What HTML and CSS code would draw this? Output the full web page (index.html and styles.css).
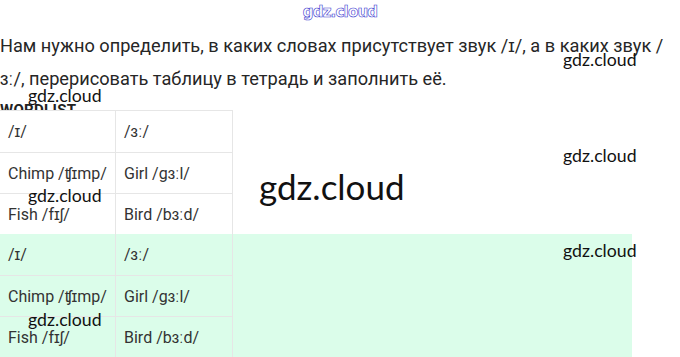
FILE: index.html
```html
<!DOCTYPE html>
<html lang="ru">
<head>
<meta charset="utf-8">
<link rel="stylesheet" href="styles.css">
</head>
<body>
<div class="page">
  <header class="logo">gdz.cloud</header>
  <p class="intro">Нам нужно определить, в каких словах присутствует звук /ɪ/, а в каких звук /<br>ɜː/, перерисовать таблицу в тетрадь и заполнить её.</p>
  <div class="wordlist"><span>WORDLIST</span></div>
  <table class="words">
    <tr class="r1"><td class="c1">/ɪ/</td><td class="c2">/ɜː/</td></tr>
    <tr class="r2"><td>Chimp /ʧɪmp/</td><td>Girl /gɜːl/</td></tr>
    <tr class="r3"><td>Fish /fɪʃ/</td><td>Bird /bɜːd/</td></tr>
  </table>
  <div class="answer">
    <table class="words">
      <tr class="r1"><td class="c1">/ɪ/</td><td class="c2">/ɜː/</td></tr>
      <tr class="r2"><td>Chimp /ʧɪmp/</td><td>Girl /gɜːl/</td></tr>
      <tr class="r3"><td>Fish /fɪʃ/</td><td>Bird /bɜːd/</td></tr>
    </table>
  </div>
  <span class="wm wm-a">gdz.cloud</span>
  <span class="wm wm-b">gdz.cloud</span>
  <span class="wm wm-c">gdz.cloud</span>
  <span class="wm wm-d">gdz.cloud</span>
  <span class="wm wm-e">gdz.cloud</span>
  <span class="wm wm-f">gdz.cloud</span>
  <span class="wm wm-big">gdz.cloud</span>
</div>
</body>
</html>
```

FILE: styles.css
```css
html, body {
  margin: 0;
  padding: 0;
  background: #ffffff;
}
.page {
  position: relative;
  width: 680px;
  height: 357px;
  overflow: hidden;
  font-family: Roboto, "Liberation Sans", sans-serif;
  color: #2a2a2a;
}
.logo {
  height: 25px;
  text-align: center;
  font-family: "DejaVu Sans", sans-serif;
  font-weight: 700;
  font-size: 15px;
  line-height: 24px;
  color: #ffffff;
  -webkit-text-stroke: 0.6px #3a3ad0;
  letter-spacing: -0.8px;
}
.intro {
  margin: 0;
  padding-top: 4px;
  font-size: 18.2px;
  line-height: 33px;
  color: #262626;
  white-space: nowrap;
}
.wordlist {
  height: 7px;
  overflow: hidden;
  margin-top: 8px;
}
.wordlist span {
  display: block;
  font-weight: 700;
  font-size: 15px;
  line-height: 14px;
  letter-spacing: 0.3px;
  color: #222;
}
.words {
  border-collapse: collapse;
  width: 233px;
  font-size: 16px;
  color: #333;
}
.words td {
  border: 1px solid #e6e6e6;
  padding: 0 0 0 8px;
  height: 40px;
  vertical-align: middle;
}
.words td:first-child {
  border-left: none;
  width: 107px;
}
.words .r1 td {
  height: 41px;
}
.answer {
  width: 632px;
  height: 123px;
  margin-top: -1px;
  background: #dbfdea;
}
.answer .words tr.r1 td {
  border-top: none;
}
.wm {
  position: absolute;
  font-family: Lato, "Open Sans", sans-serif;
  font-size: 17.7px;
  line-height: 18px;
  color: #111;
}
.wm-a { left: 563px; top: 51px; }
.wm-b { left: 28px; top: 87px; }
.wm-c { left: 563px; top: 147px; }
.wm-d { left: 28px; top: 187px; }
.wm-e { left: 563px; top: 242px; }
.wm-f { left: 28px; top: 311px; }
.wm-big {
  left: 259px;
  top: 167px;
  font-size: 35px;
  line-height: 38px;
}
```
